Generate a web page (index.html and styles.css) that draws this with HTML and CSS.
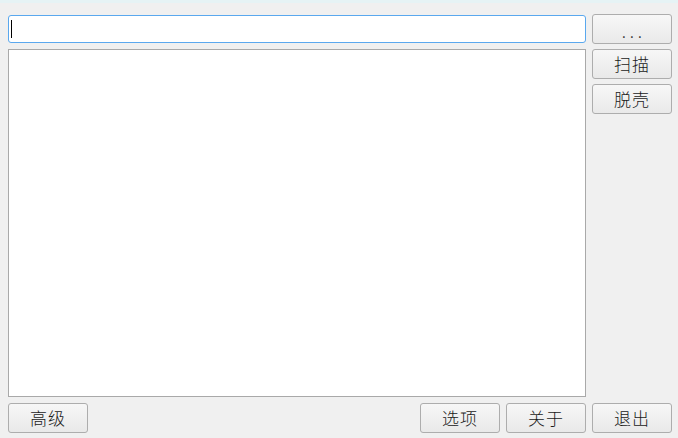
FILE: index.html
```html
<!DOCTYPE html>
<html>
<head>
<meta charset="utf-8">
<link rel="stylesheet" href="styles.css">
</head>
<body>
<div class="strip"></div>
<div class="main">
  <div class="input-wrap"><div class="input"><span class="caret"></span></div></div>
  <button class="btn dots">. . .</button>
  <div class="list"></div>
  <div class="side">
    <button class="btn">扫描</button>
    <button class="btn">脱壳</button>
  </div>
</div>
<div class="bottom">
  <button class="btn">高级</button>
  <div class="spacer"></div>
  <button class="btn">选项</button>
  <button class="btn">关于</button>
  <button class="btn">退出</button>
</div>
</body>
</html>
```

FILE: styles.css
```css
html, body {
  margin: 0;
  padding: 0;
  background: #f0f0f0;
  width: 678px;
  height: 438px;
  overflow: hidden;
  font-family: "Noto Sans CJK SC", "Noto Sans", sans-serif;
}
.strip {
  height: 3px;
  background: #e6f3f5;
}
.main {
  display: grid;
  grid-template-columns: 578px 80px;
  grid-template-rows: 30px 348px;
  column-gap: 6px;
  row-gap: 5px;
  padding: 11px 6px 0 8px;
}
.input-wrap {
  display: flex;
  align-items: center;
}
.input {
  box-sizing: border-box;
  width: 100%;
  height: 28px;
  background: #fff;
  border: 1px solid #5aa8ee;
  border-radius: 3px;
  display: flex;
  align-items: center;
  padding-left: 2px;
}
.caret {
  width: 1px;
  height: 18px;
  background: #000;
}
.btn {
  box-sizing: border-box;
  width: 80px;
  height: 30px;
  margin: 0;
  padding: 0;
  border: 1px solid #adadad;
  border-radius: 3px;
  background: linear-gradient(#f7f7f7, #e9e9e9);
  font-family: "Noto Sans CJK SC", "Noto Sans", sans-serif;
  font-size: 17px;
  font-weight: 300;
  letter-spacing: 1px;
  color: #1a1a1a;
  line-height: 26px;
  display: flex;
  align-items: center;
  justify-content: center;
}
.dots {
  letter-spacing: 0;
  padding-top: 4px;
}
.list {
  box-sizing: border-box;
  background: #fff;
  border: 1px solid #a9a9a9;
}
.side {
  display: flex;
  flex-direction: column;
  gap: 5px;
}
.bottom {
  display: flex;
  gap: 6px;
  padding: 6px 6px 0 8px;
}
.spacer {
  flex: 1;
}
```
